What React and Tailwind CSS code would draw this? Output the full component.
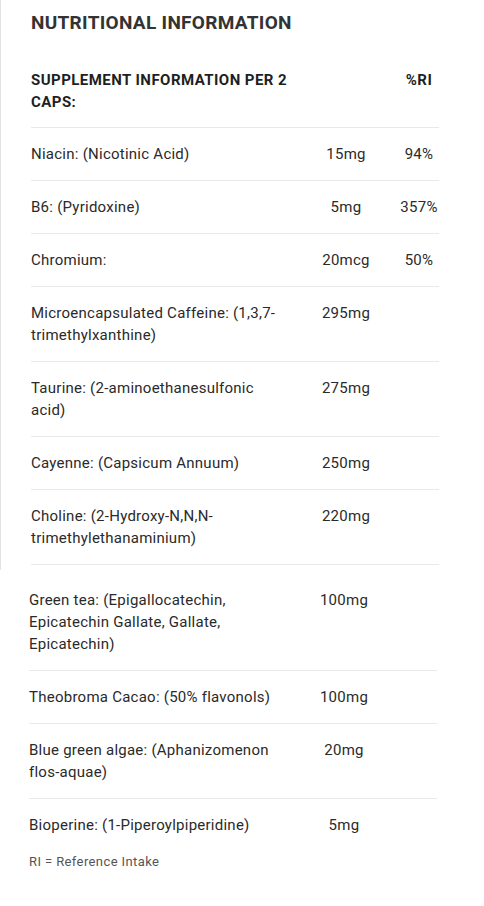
import React from 'react';

const firstRows = [
  { name: 'Niacin: (Nicotinic Acid)', amount: '15mg', ri: '94%' },
  { name: 'B6: (Pyridoxine)', amount: '5mg', ri: '357%' },
  { name: 'Chromium:', amount: '20mcg', ri: '50%' },
  { name: 'Microencapsulated Caffeine: (1,3,7-trimethylxanthine)', amount: '295mg', ri: '' },
  { name: 'Taurine: (2-aminoethanesulfonic acid)', amount: '275mg', ri: '' },
  { name: 'Cayenne: (Capsicum Annuum)', amount: '250mg', ri: '' },
  { name: 'Choline: (2-Hydroxy-N,N,N-trimethylethanaminium)', amount: '220mg', ri: '' },
];

const secondRows = [
  { name: 'Green tea: (Epigallocatechin, Epicatechin Gallate, Gallate, Epicatechin)', amount: '100mg' },
  { name: 'Theobroma Cacao: (50% flavonols)', amount: '100mg' },
  { name: 'Blue green algae: (Aphanizomenon flos-aquae)', amount: '20mg' },
  { name: 'Bioperine: (1-Piperoylpiperidine)', amount: '5mg' },
];

const Row = ({ name, amount, ri, last }) => (
  <div
    className={`grid grid-cols-[262px_1fr_40px] py-[15px] text-[15px] leading-[22px] tracking-[0.25px] text-[#2a2a2a] ${
      last ? '' : 'border-b border-[#e9e9e9]'
    }`}
  >
    <div className="pr-2">{name}</div>
    <div className="text-center">{amount}</div>
    <div className="text-center">{ri}</div>
  </div>
);

export default function App() {
  return (
    <div className="w-[484px] min-h-[906px] bg-white font-['Roboto',sans-serif]">
      {/* first block, with the grey rule on the left */}
      <div className="border-l border-[#e3e3e3] pl-[30px] pr-[45px] pt-[9px] pb-[5px]">
        <h2 className="text-[19px] leading-[28px] font-bold tracking-[0.3px] text-[#333333] mb-[32px]">
          NUTRITIONAL INFORMATION
        </h2>

        <div className="grid grid-cols-[262px_1fr_40px] pb-[14px] border-b border-[#e9e9e9] text-[15px] leading-[22px] tracking-[0.45px] font-bold text-[#1f1f1f]">
          <div className="pr-1">SUPPLEMENT INFORMATION PER 2 CAPS:</div>
          <div />
          <div className="text-center">%RI</div>
        </div>

        {firstRows.map((r) => (
          <Row key={r.name} {...r} />
        ))}
      </div>

      {/* second block */}
      <div className="pl-[29px] pr-[47px] pt-[4px] pb-8">
        {secondRows.map((r, i) => (
          <Row key={r.name} {...r} ri="" last={i === secondRows.length - 1} />
        ))}
        <p className="mt-[2px] text-[13px] leading-[18px] tracking-[0.4px] text-[#555555]">RI = Reference Intake</p>
      </div>
    </div>
  );
}
